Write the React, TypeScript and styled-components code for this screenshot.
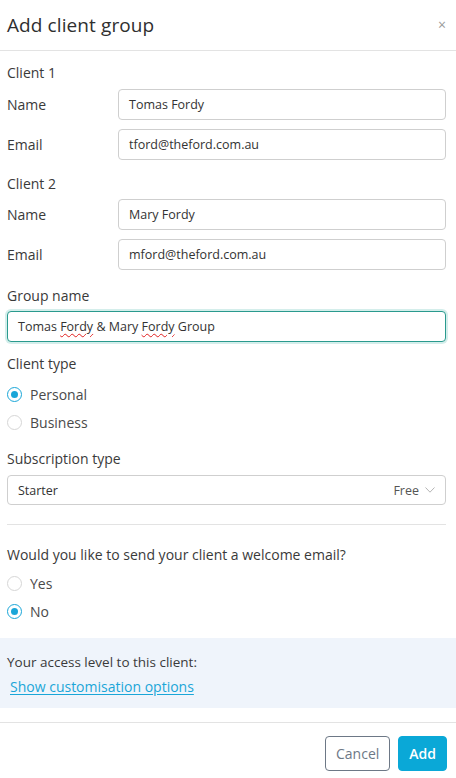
import React from "react";
import styled, { createGlobalStyle } from "styled-components";

const Global = createGlobalStyle`
  html, body { margin: 0; padding: 0; background: #fff; }
  body { font-family: "Open Sans", "Liberation Sans", sans-serif; color: #3a3a3a; }
  * { box-sizing: border-box; }
`;

const Modal = styled.div`
  width: 456px;
  height: 778px;
  display: flex;
  flex-direction: column;
  background: #fff;
`;

const Header = styled.div`
  height: 51px;
  padding: 0 10px 0 7px;
  display: flex;
  align-items: center;
  justify-content: space-between;
  border-bottom: 1px solid #e3e3e3;
`;

const Title = styled.h1`
  margin: 0;
  font-size: 19px;
  font-weight: 400;
  color: #2f2f2f;
  letter-spacing: 0.1px;
`;

const Close = styled.span`
  font-size: 14px;
  color: #9a9a9a;
  line-height: 1;
`;

const Body = styled.div`
  padding: 11px 10px 0 7px;
  display: flex;
  flex-direction: column;
`;

const SectionLabel = styled.div<{ $mt?: number; $mb?: number }>`
  font-size: 14px;
  line-height: 22px;
  margin-top: ${(p) => p.$mt ?? 0}px;
  margin-bottom: ${(p) => p.$mb ?? 4}px;
  color: #3a3a3a;
`;

const FieldRow = styled.div<{ $mt?: number }>`
  display: grid;
  grid-template-columns: 111px 1fr;
  align-items: center;
  margin-top: ${(p) => p.$mt ?? 0}px;
`;

const FieldLabel = styled.span`
  font-size: 14px;
  color: #3a3a3a;
`;

const Input = styled.div<{ $focus?: boolean; $h?: number }>`
  height: ${(p) => p.$h ?? 31}px;
  border: 1px solid ${(p) => (p.$focus ? "#2a9a8e" : "#cfcfcf")};
  border-radius: 4px;
  padding: 0 10px;
  display: flex;
  align-items: center;
  justify-content: space-between;
  font-size: 12.5px;
  color: #333;
  background: #fff;
  box-shadow: ${(p) => (p.$focus ? "0 0 0 2px #d4eeeb" : "none")};
`;

const Misspelled = styled.span`
  text-decoration: underline wavy #e02020;
  text-decoration-thickness: 1px;
  text-underline-offset: 2px;
`;

const RadioRow = styled.label`
  height: 28px;
  display: flex;
  align-items: center;
  gap: 8px;
  font-size: 14px;
  color: #4a4a4a;
`;

const RadioDot = styled.span<{ $on?: boolean }>`
  width: 15px;
  height: 15px;
  border-radius: 50%;
  border: 1px solid ${(p) => (p.$on ? "#1aa6d8" : "#d6d6d6")};
  display: flex;
  align-items: center;
  justify-content: center;
  &::after {
    content: "";
    width: 7px;
    height: 7px;
    border-radius: 50%;
    background: ${(p) => (p.$on ? "#1aa6d8" : "transparent")};
  }
`;

const SelectRight = styled.span`
  display: flex;
  align-items: center;
  gap: 6px;
  color: #555;
`;

const Divider = styled.hr`
  border: 0;
  border-top: 1px solid #e3e3e3;
  margin: 19px 0 19px;
`;

const Panel = styled.div`
  margin-top: 13px;
  background: #eff4fb;
  padding: 13px 10px 10px 7px;
`;

const PanelText = styled.div`
  font-size: 13.5px;
  line-height: 22px;
  color: #3a3a3a;
`;

const Link = styled.a`
  display: block;
  margin-left: 3px;
  margin-top: 3px;
  font-size: 14px;
  line-height: 22px;
  color: #1aa6d8;
  text-decoration: underline;
  text-underline-offset: 2px;
`;

const Footer = styled.div`
  margin-top: 14px;
  border-top: 1px solid #e3e3e3;
  padding: 13px 9px 0 0;
  display: flex;
  justify-content: flex-end;
  gap: 8px;
`;

const Button = styled.button<{ $primary?: boolean }>`
  height: 35px;
  padding: 0 10px;
  border-radius: 4px;
  font-family: inherit;
  font-size: 14px;
  border: 1px solid ${(p) => (p.$primary ? "#0aa8d7" : "#6d7886")};
  background: ${(p) => (p.$primary ? "#0aa8d7" : "#fff")};
  color: ${(p) => (p.$primary ? "#fff" : "#6d7886")};
  font-weight: ${(p) => (p.$primary ? 600 : 400)};
`;

const Chevron = () => (
  <svg width="10" height="6" viewBox="0 0 10 6" fill="none">
    <path d="M0.5 0.5L5 5.2L9.5 0.5" stroke="#b5b5b5" strokeWidth="1" />
  </svg>
);

export default function App() {
  return (
    <Modal>
      <Global />
      <Header>
        <Title>Add client group</Title>
        <Close>×</Close>
      </Header>
      <Body>
        <SectionLabel $mb={5}>Client 1</SectionLabel>
        <FieldRow>
          <FieldLabel>Name</FieldLabel>
          <Input>Tomas Fordy</Input>
        </FieldRow>
        <FieldRow $mt={9}>
          <FieldLabel>Email</FieldLabel>
          <Input>tford@theford.com.au</Input>
        </FieldRow>

        <SectionLabel $mt={13}>Client 2</SectionLabel>
        <FieldRow>
          <FieldLabel>Name</FieldLabel>
          <Input>Mary Fordy</Input>
        </FieldRow>
        <FieldRow $mt={9}>
          <FieldLabel>Email</FieldLabel>
          <Input>mford@theford.com.au</Input>
        </FieldRow>

        <SectionLabel $mt={15}>Group name</SectionLabel>
        <Input $focus>
          <span>
            Tomas <Misspelled>Fordy</Misspelled> &amp; Mary <Misspelled>Fordy</Misspelled> Group
          </span>
        </Input>

        <SectionLabel $mt={11} $mb={5}>Client type</SectionLabel>
        <RadioRow>
          <RadioDot $on />
          Personal
        </RadioRow>
        <RadioRow>
          <RadioDot />
          Business
        </RadioRow>

        <SectionLabel $mt={12} $mb={5}>Subscription type</SectionLabel>
        <Input $h={30}>
          <span>Starter</span>
          <SelectRight>
            Free <Chevron />
          </SelectRight>
        </Input>

        <Divider />

        <SectionLabel $mb={3}>Would you like to send your client a welcome email?</SectionLabel>
        <RadioRow>
          <RadioDot />
          Yes
        </RadioRow>
        <RadioRow>
          <RadioDot $on />
          No
        </RadioRow>
      </Body>
      <Panel>
        <PanelText>Your access level to this client:</PanelText>
        <Link href="#">Show customisation options</Link>
      </Panel>
      <Footer>
        <Button>Cancel</Button>
        <Button $primary>Add</Button>
      </Footer>
    </Modal>
  );
}
